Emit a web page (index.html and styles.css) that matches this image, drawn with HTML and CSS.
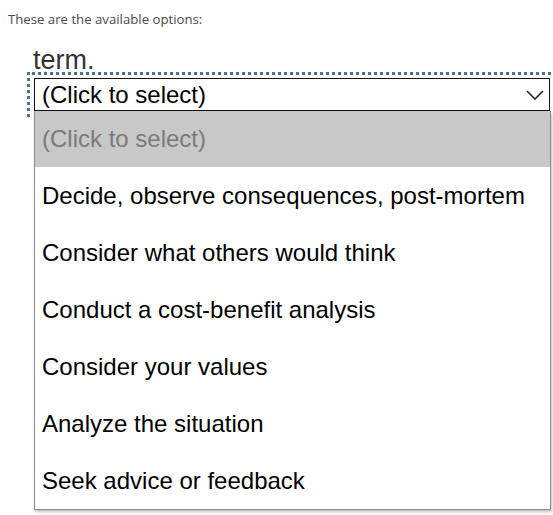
FILE: index.html
```html
<!DOCTYPE html>
<html>
<head>
<meta charset="utf-8">
<link rel="stylesheet" href="styles.css">
</head>
<body>
<p class="intro">These are the available options:</p>
<div class="question">term.</div>
<div class="field">
  <div class="select">
    <span class="select-text">(Click to select)</span>
    <svg class="chevron" width="18" height="10" viewBox="0 0 18 10"><polyline points="1,1 9,9 17,1" fill="none" stroke="#222" stroke-width="1.6"/></svg>
  </div>
  <ul class="listbox">
    <li class="option placeholder">(Click to select)</li>
    <li class="option">Decide, observe consequences, post-mortem</li>
    <li class="option">Consider what others would think</li>
    <li class="option">Conduct a cost-benefit analysis</li>
    <li class="option">Consider your values</li>
    <li class="option">Analyze the situation</li>
    <li class="option">Seek advice or feedback</li>
  </ul>
</div>
</body>
</html>
```

FILE: styles.css
```css
html, body {
  margin: 0;
  padding: 0;
  background: #ffffff;
  overflow: hidden;
}
body {
  width: 553px;
  height: 515px;
  font-family: "Liberation Sans", Arial, sans-serif;
}
.intro {
  margin: 0;
  padding: 10px 0 0 8px;
  font-family: "Open Sans", sans-serif;
  font-size: 13.2px;
  line-height: 18px;
  color: #4a4a4a;
}
.question {
  margin-top: 20px;
  padding-left: 33px;
  font-size: 27px;
  line-height: 24px;
  height: 24px;
  color: #333;
}
.field {
  position: relative;
  margin-left: 27px;
  width: 540px;
  border-top: 3px dotted #4a7299;
  border-left: 3px dotted #4a7299;
  padding: 3px 0 6px 4px;
}
.select {
  display: flex;
  align-items: center;
  justify-content: space-between;
  width: 516px;
  height: 33px;
  box-sizing: border-box;
  border: 1px solid #111;
  padding: 0 5px 0 7px;
  background: #fff;
}
.select-text {
  font-size: 24px;
  color: #000;
  line-height: 31px;
}
.listbox {
  position: absolute;
  left: 4px;
  top: 36px;
  margin: 0;
  padding: 0;
  list-style: none;
  width: 517px;
  box-sizing: border-box;
  background: #fff;
  border: 1px solid #8a8a8a;
  border-top: none;
  box-shadow: 1px 2px 3px rgba(0,0,0,0.25);
}
.option {
  height: 57px;
  line-height: 57px;
  padding-left: 7px;
  font-size: 24px;
  color: #000;
  white-space: nowrap;
}
.option.placeholder {
  background: #c8c8c8;
  color: #7a7a7a;
  height: 56px;
  line-height: 56px;
}
```
